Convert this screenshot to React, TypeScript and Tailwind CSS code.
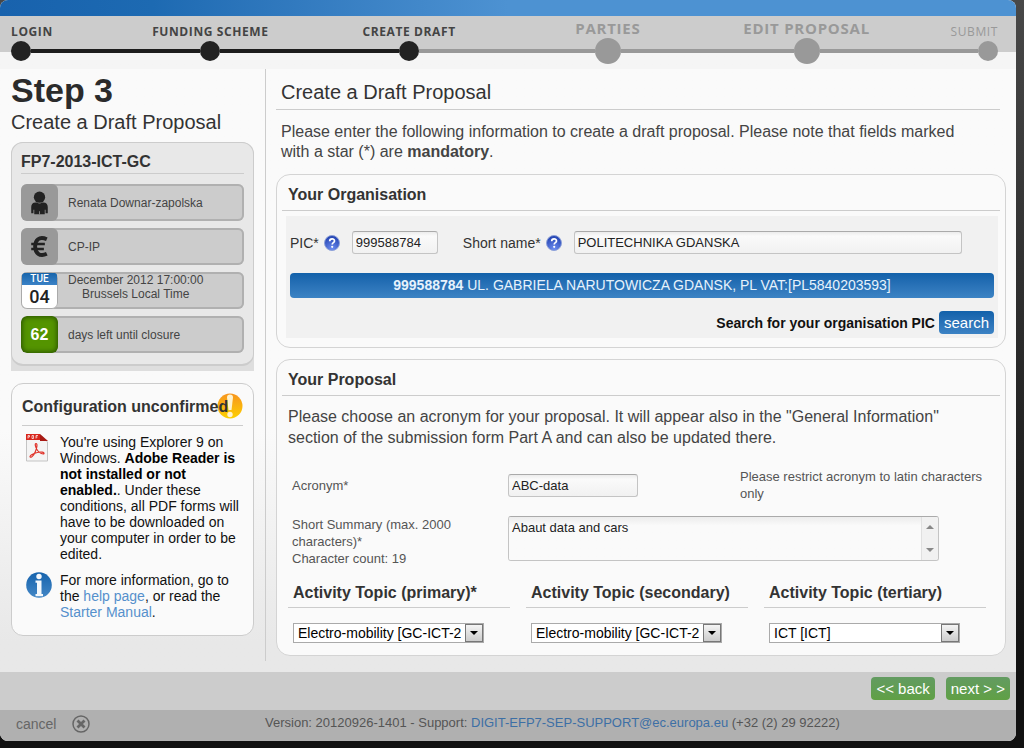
import { useState, type ReactNode } from "react";

const steps = [
  { name: "LOGIN", status: "done", nextDone: true },
  { name: "FUNDING SCHEME", status: "done", nextDone: true },
  { name: "CREATE DRAFT", status: "done", nextDone: false },
  { name: "PARTIES", status: "upcoming", nextDone: false },
  { name: "EDIT PROPOSAL", status: "upcoming", nextDone: false },
  { name: "SUBMIT", status: "last", nextDone: false },
];

const topics = [
  { id: "primary", label: "Activity Topic (primary)*", value: "Electro-mobility [GC-ICT-2" },
  { id: "secondary", label: "Activity Topic (secondary)", value: "Electro-mobility [GC-ICT-2" },
  { id: "tertiary", label: "Activity Topic (tertiary)", value: "ICT [ICT]" },
];

const inputStyle =
  "h-[23px] rounded-[3px] border border-[#c4c4c4] border-t-[#aaa] bg-linear-to-b from-[#ececec] via-[#fafafa] via-20% to-[#f1f1f1] px-[3px] text-[13px] text-[#222] outline-none";

const Stepper = () => (
  <nav className="bg-linear-to-b from-[#ccc] from-[36px] to-[#f5f5f5] to-[36px] pr-[18px] pl-[11px] pb-[5px] font-['Open_Sans',sans-serif]">
    <ol className="grid grid-cols-[100px_repeat(4,minmax(0,1fr))_92px]">
      {steps.map((step, i) => {
        const first = i === 0;
        const last = i === steps.length - 1;
        const done = step.status === "done";
        return (
          <li key={step.name}>
            <div className={`flex h-[22px] items-end whitespace-nowrap ${first ? "justify-start" : last ? "justify-end" : "justify-center"}`}>
              <span
                className={
                  done
                    ? "text-xs leading-[13px] font-bold tracking-wider text-[#444]"
                    : last
                      ? "text-xs leading-[13px] tracking-wider text-[#999]"
                      : "text-[15px] leading-5 font-bold tracking-wider text-[#999]"
                }
              >
                {step.name}
              </span>
            </div>
            <div className="flex h-[26px] items-center">
              {!first && <span className={`h-1 flex-1 ${done ? "bg-[#1d1d1d]" : "bg-[#999]"}`} />}
              <span className={`rounded-full ${done ? "size-5 bg-[#222]" : last ? "size-5 bg-[#999]" : "size-[26px] bg-[#999]"}`} />
              {!last && <span className={`h-1 flex-1 ${step.nextDone ? "bg-[#1d1d1d]" : "bg-[#999]"}`} />}
            </div>
          </li>
        );
      })}
    </ol>
  </nav>
);

const InfoRow = ({ icon, children }: { icon: ReactNode; children: ReactNode }) => (
  <li className="flex h-[37px] items-center overflow-hidden rounded-md bg-[#ccc] text-xs leading-[14px] text-[#444] inset-ring-2 inset-ring-[#b0b0b0]">
    <div className="mr-2.5 size-[37px] shrink-0 overflow-hidden rounded-md">{icon}</div>
    <div>{children}</div>
  </li>
);

const PersonIcon = () => (
  <svg viewBox="0 0 38 38" className="size-full bg-[#999]" aria-hidden="true">
    <circle cx="19" cy="13.500" r="5.800" fill="#222" />
    <path d="M15 19h1.500c1.500 1.200 3.500 1.200 5 0H23c3 0 4.500 2 4.500 4.500V30h-2.300v-3.500h-.8V31H13.600v-4.500h-.8V30h-2.300v-6.500c0-2.500 1.500-4.500 4.500-4.500z" fill="#222" />
    <path d="M18.600 28h.8v3h-.8z" fill="#999" />
  </svg>
);

const EuroIcon = () => (
  <svg viewBox="0 0 38 38" className="size-full bg-[#999]" aria-hidden="true">
    <path d="M26.500 11.500c-8-3.500-12 1-12 7.500s4.500 11 12 7.500" fill="none" stroke="#222" strokeWidth="4" />
    <path d="M10.500 16.500h14M10.500 21.500h13" stroke="#222" strokeWidth="2.600" />
  </svg>
);

const HelpIcon = () => (
  <svg viewBox="0 0 16 16" className="size-4" aria-hidden="true">
    <defs>
      <radialGradient id="help" cx="0.5" cy="0.9" r="0.9">
        <stop offset="0" stopColor="#6d8df0" />
        <stop offset="1" stopColor="#1f3fae" />
      </radialGradient>
    </defs>
    <circle cx="8" cy="8" r="7.500" fill="url(#help)" stroke="#8da0d8" />
    <path d="M5.700 6.300c0-3.200 4.800-3.100 4.800-.3 0 1.700-2.300 1.700-2.300 3.500" fill="none" stroke="#fff" strokeWidth="1.700" />
    <circle cx="8.200" cy="11.800" r="1.100" fill="#fff" />
  </svg>
);

const PdfIcon = () => (
  <svg viewBox="0 0 22 28" className="h-7 w-[22px]" aria-hidden="true">
    <path d="M.5 1h14l7 7v19H.5z" fill="#f4f4f4" stroke="#c4c4c4" />
    <path d="M0 0h14v6H0z" fill="#d8261c" />
    <path d="M14 0l8 7h-8z" fill="#a81a14" />
    <path d="M2 4.500v-3h1.500v1.500H2M6 1.500v3h1.500v-3zM10 4.500v-3h2M10 3h1.500" fill="none" stroke="#fff" strokeWidth=".7" />
    <path d="M10 9.500c1.800 0 .8 5-.8 8.500-1.500 3.500-4 6-5 5s2.500-3.500 7-4.500c4-1 7.300-.3 6.800 1s-4.500-.3-6.500-3-3-7-1.500-7z" fill="none" stroke="#e0332a" strokeWidth="1.200" />
  </svg>
);

const InfoIcon = () => (
  <svg viewBox="0 0 26 26" className="size-[26px]" aria-hidden="true">
    <defs>
      <linearGradient id="info" x1="0" y1="0" x2="0" y2="1">
        <stop offset="0" stopColor="#1663ad" />
        <stop offset="1" stopColor="#4387c6" />
      </linearGradient>
    </defs>
    <circle cx="13" cy="13" r="12.800" fill="url(#info)" />
    <circle cx="13" cy="4.500" r="2.700" fill="#f4f8fc" />
    <path d="M9.500 8.500h6V22H17v2.200H9.500V22H11V10.700H9.500z" fill="#f4f8fc" />
  </svg>
);

const WarningIcon = () => (
  <svg viewBox="0 0 26 26" className="size-[26px]" aria-hidden="true">
    <defs>
      <linearGradient id="warn" x1="0" y1="0" x2="0" y2="1">
        <stop offset="0" stopColor="#f7941d" />
        <stop offset="1" stopColor="#fdd000" />
      </linearGradient>
    </defs>
    <circle cx="13" cy="13" r="12.500" fill="url(#warn)" />
    <path d="M10 4.500a3 3 0 0 1 6 0L14.500 17h-3z" fill="#fff3cf" />
    <circle cx="13" cy="21.500" r="2.700" fill="#fff3cf" />
  </svg>
);

const Sidebar = () => (
  <aside className="w-[266px] shrink-0 border-r border-[#ccc] pr-[11px] pl-[11px]">
    <h1 className="pt-[3px] text-[34px] leading-[36px] font-bold text-[#2b2b2b]">Step 3</h1>
    <p className="text-xl leading-7 text-[#333]">Create a Draft Proposal</p>

    <section className="mt-1.5 rounded-t-xl bg-[#dedede] pb-[5px]">
      <div className="rounded-xl border border-b-2 border-[#ccc] bg-[#e8e8e8] px-[9px] pt-2 pb-[11px]">
        <h2 className="mb-2.5 border-b border-[#ccc] text-base leading-[22px] font-bold text-[#333]">FP7-2013-ICT-GC</h2>
        <ul className="flex flex-col gap-[7px]">
          <InfoRow icon={<PersonIcon />}>Renata Downar-zapolska</InfoRow>
          <InfoRow icon={<EuroIcon />}>CP-IP</InfoRow>
          <InfoRow
            icon={
              <div className="size-full rounded-md border border-[#aaa] bg-white text-center font-['Roboto',sans-serif]">
                <div className="h-3 bg-linear-to-b from-[#1765ab] to-[#3a82c6] text-[10px] leading-3 font-medium text-white">TUE</div>
                <div className="text-lg leading-6 font-medium text-[#222]">04</div>
              </div>
            }
          >
            <p className="pb-2">
              December 2012 17:00:00
              <br />
              <span className="pl-3.5">Brussels Local Time</span>
            </p>
          </InfoRow>
          <InfoRow
            icon={
              <div className="flex size-full items-center justify-center rounded-md bg-[#549400] text-base font-bold text-white inset-shadow-[0_0_5px_1px_#285000]">
                62
              </div>
            }
          >
            days left until closure
          </InfoRow>
        </ul>
      </div>
    </section>

    <section className="mt-3 rounded-xl border border-[#ccc] bg-[#fafafa] px-2.5 pt-2.5 pb-[15px]">
      <div className="relative mb-2 border-b border-[#ccc] pb-[5px]">
        <div className="absolute -top-px right-0">
          <WarningIcon />
        </div>
        <h2 className="relative text-base leading-[26px] font-bold text-[#333]">Configuration unconfirmed</h2>
      </div>
      <div className="grid grid-cols-[34px_1fr] gap-x-1 gap-y-2.5 text-sm leading-[16px] text-[#111]">
        <div className="pl-1">
          <PdfIcon />
        </div>
        <p>
          You're using Explorer 9 on Windows. <b className="text-black">Adobe Reader is not installed or not enabled.</b>. Under these
          conditions, all PDF forms will have to be downloaded on your computer in order to be edited.
        </p>
        <div className="pl-1">
          <InfoIcon />
        </div>
        <p>
          For more information, go to the <a href="#help" className="text-[#5590cc]">help page</a>, or read the{" "}
          <a href="#manual" className="text-[#5590cc]">Starter Manual</a>.
        </p>
      </div>
    </section>
  </aside>
);

const Panel = ({ title, children }: { title: string; children: ReactNode }) => (
  <section className="rounded-[14px] border border-[#d4d4d4] bg-[#fafafa] px-[5px]">
    <h3 className="border-b border-[#ccc] px-1.5 pt-2 pb-[3px] text-base leading-6 font-bold text-[#333]">{title}</h3>
    {children}
  </section>
);

const Organisation = () => (
  <Panel title="Your Organisation">
    <div className="mt-[5px] mr-0.5 mb-[9px] ml-1 bg-[#f1f1f1] px-1 pt-[15px] pb-1">
      <div className="flex items-center text-sm text-[#333]">
        <label htmlFor="pic">PIC*</label>
        <span className="ml-[5px]">
          <HelpIcon />
        </span>
        <input id="pic" defaultValue="999588784" className={`${inputStyle} ml-3 w-[86px]`} />
        <label htmlFor="short-name" className="ml-[25px]">
          Short name*
        </label>
        <span className="ml-[5px]">
          <HelpIcon />
        </span>
        <input id="short-name" defaultValue="POLITECHNIKA GDANSKA" className={`${inputStyle} mr-8 ml-3 min-w-0 flex-1`} />
      </div>
      <p className="mt-[19px] rounded-[4px] bg-linear-to-b from-[#1261aa] to-[#3c83c4] text-center text-sm leading-[25px] text-[#e6f2fc]">
        <b>999588784</b> UL. GABRIELA NARUTOWICZA GDANSK, PL VAT:[PL5840203593]
      </p>
      <div className="mt-[13px] flex items-center justify-end gap-1">
        <span className="text-sm font-bold text-[#111]">Search for your organisation PIC</span>
        <button className="h-[23px] rounded-[4px] bg-linear-to-b from-[#1261aa] to-[#3c83c4] px-[5px] text-[15px] leading-[23px] text-white">
          search
        </button>
      </div>
    </div>
  </Panel>
);

const Proposal = () => {
  const [summary, setSummary] = useState<string>("Abaut data and cars");

  return (
    <Panel title="Your Proposal">
      <p className="px-1.5 pt-2.5 text-base leading-[21px] text-[#444]">
        Please choose an acronym for your proposal. It will appear also in the "General Information"
        <br />
        section of the submission form Part A and can also be updated there.
      </p>

      <div className="mt-5 flex items-center pl-2.5 text-[13px] leading-[17px] text-[#555]">
        <label htmlFor="acronym" className="w-[216px]">
          Acronym*
        </label>
        <input id="acronym" defaultValue="ABC-data" className={`${inputStyle} w-[130px]`} />
        <p className="ml-auto w-[260px]">Please restrict acronym to latin characters only</p>
      </div>

      <div className="mt-3.5 flex pl-2.5 text-[13px] leading-[17px] text-[#555]">
        <label htmlFor="summary" className="w-[216px] pr-10">
          Short Summary (max. 2000 characters)*
          <br />
          Character count: {summary.length}
        </label>
        <div className="mr-[61px] flex h-[45px] flex-1 overflow-hidden rounded-[3px] border border-[#c4c4c4] border-t-[#aaa]">
          <textarea
            id="summary"
            value={summary}
            onChange={(e) => setSummary(e.target.value)}
            className="flex-1 resize-none overflow-hidden bg-linear-to-b from-[#ececec] to-[#fafafa] to-20% px-[3px] pt-0.5 text-[13px] leading-[17px] text-[#222] outline-none"
          />
          <div className="flex w-[17px] flex-col items-center justify-between border-l border-[#e0e0e0] bg-[#f1f1f1] py-2">
            <svg viewBox="0 0 8 4" className="h-1 w-2" aria-hidden="true">
              <path d="M0 4l4-4 4 4z" fill="#888" />
            </svg>
            <svg viewBox="0 0 8 4" className="h-1 w-2" aria-hidden="true">
              <path d="M0 0l4 4 4-4z" fill="#888" />
            </svg>
          </div>
        </div>
      </div>

      <div className="mt-3.5 mr-3.5 ml-1.5 grid grid-cols-3 gap-4 pb-3">
        {topics.map((topic) => (
          <div key={topic.id}>
            <label htmlFor={topic.id} className="block border-b border-[#ccc] pb-0.5 pl-[5px] text-base leading-6 font-bold whitespace-nowrap text-[#333]">
              {topic.label}
            </label>
            <div className="relative mt-[15px] ml-[5px] w-[191px]">
              <select id={topic.id} className="block h-5 w-full appearance-none border border-[#aaa] bg-white pr-5 pl-1 text-sm leading-[18px] text-black">
                <option>{topic.value}</option>
              </select>
              <span className="pointer-events-none absolute top-px right-px flex h-[18px] w-[18px] items-center justify-center border border-[#777] bg-linear-to-b from-[#f4f4f4] to-[#ccc]">
                <svg viewBox="0 0 8 4" className="h-1 w-2" aria-hidden="true">
                  <path d="M0 0l4 4 4-4z" fill="#000" />
                </svg>
              </span>
            </div>
          </div>
        ))}
      </div>
    </Panel>
  );
};

const navButton =
  "h-[23px] rounded-[4px] bg-linear-to-b from-[#639b61] to-[#60a044] px-[5px] text-[15px] leading-[23px] text-white";

export default function App() {
  return (
    <div className="min-h-screen bg-linear-to-b from-[#484848] to-[#111] to-90% pr-2 pb-[7px] font-['Liberation_Sans',Arial,sans-serif]">
      <div className="overflow-hidden rounded-[8px] bg-[#fafafa]">
        <header className="h-4 bg-linear-to-r from-[#1862ad] via-[#1d6ab2] via-15% to-[#4d92d2] to-50%" />
        <Stepper />

        <main className="flex bg-linear-to-b from-[#fafafa] from-60% to-[#e8e8e8] to-95% pb-[11px]">
          <Sidebar />
          <div className="min-w-0 flex-1 px-2.5 pb-[5px]">
            <h2 className="mr-1.5 border-b border-[#ccc] pt-[9px] pb-[3px] pl-[5px] text-xl leading-7 text-[#333]">Create a Draft Proposal</h2>
            <p className="mt-3 mb-3 pr-8 pl-[5px] text-base leading-5 text-[#444]">
              Please enter the following information to create a draft proposal. Please note that fields marked with a star (*) are{" "}
              <b>mandatory</b>.
            </p>
            <div className="flex flex-col gap-[11px]">
              <Organisation />
              <Proposal />
            </div>
          </div>
        </main>

        <div className="flex justify-end gap-[11px] bg-[#ccc] px-1.5 pt-[5px] pb-2.5">
          <button className={navButton}>&lt;&lt; back</button>
          <button className={navButton}>next &gt; &gt;</button>
        </div>

        <footer className="flex h-[31px] items-center bg-[#b0b0b0] pb-1 text-sm text-[#666]">
          <button className="flex w-[265px] items-center gap-4 pl-4">
            cancel
            <svg viewBox="0 0 18 18" className="size-[18px]" fill="none" stroke="#666" aria-hidden="true">
              <circle cx="9" cy="9" r="8" strokeWidth="1.500" />
              <path d="M5.500 5.500l7 7M12.500 5.500l-7 7" strokeWidth="2.800" />
            </svg>
          </button>
          <p className="text-[13px] text-[#555]">
            Version: 20120926-1401 - Support:{" "}
            <a href="mailto:DIGIT-EFP7-SEP-SUPPORT@ec.europa.eu" className="text-[#3d6fa5]">
              DIGIT-EFP7-SEP-SUPPORT@ec.europa.eu
            </a>{" "}
            (+32 (2) 29 92222)
          </p>
        </footer>
      </div>
    </div>
  );
}
